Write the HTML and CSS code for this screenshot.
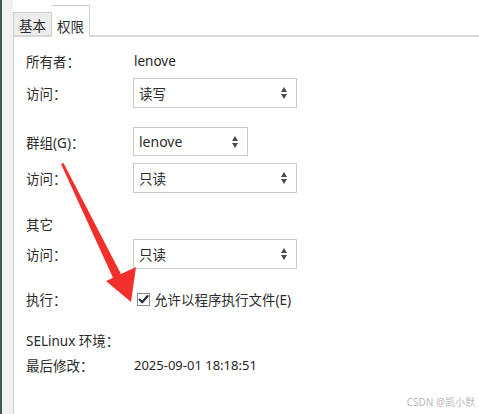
FILE: index.html
```html
<!DOCTYPE html>
<html lang="zh">
<head>
<meta charset="utf-8">
<title>权限</title>
<link rel="stylesheet" href="styles.css">
</head>
<body>
<div class="window">
  <div class="edge"></div>
  <div class="main">
    <div class="tabs">
      <div class="tab">基本</div>
      <div class="tab active">权限</div>
      <div class="tab-fill"></div>
    </div>
    <div class="panel">
      <div class="row r-owner"><span class="label">所有者：</span><span class="value">lenove</span></div>
      <div class="row r-acc1"><span class="label">访问：</span>
        <div class="combo wide"><span>读写</span><span class="spin"><i class="up"></i><i class="down"></i></span></div>
      </div>
      <div class="row r-group"><span class="label">群组(G)：</span>
        <div class="combo narrow"><span class="latin">lenove</span><span class="spin"><i class="up"></i><i class="down"></i></span></div>
      </div>
      <div class="row r-acc2"><span class="label">访问：</span>
        <div class="combo wide"><span>只读</span><span class="spin"><i class="up"></i><i class="down"></i></span></div>
      </div>
      <div class="row r-other"><span class="label">其它</span></div>
      <div class="row r-acc3"><span class="label">访问：</span>
        <div class="combo wide"><span>只读</span><span class="spin"><i class="up"></i><i class="down"></i></span></div>
      </div>
      <div class="row r-exec"><span class="label">执行：</span>
        <label class="check">
          <svg class="box" width="13" height="13" viewBox="0 0 13 13">
            <rect x="0.5" y="0.5" width="12" height="12" fill="#fff" stroke="#8a8a8a"/>
            <path d="M2.6 6.6 L5.2 9.3 L10.6 3.0" fill="none" stroke="#1f2a3a" stroke-width="2.1" stroke-linecap="round" stroke-linejoin="round"/>
          </svg>
          <span>允许以程序执行文件(E)</span>
        </label>
      </div>
      <div class="row r-selinux"><span class="label">SELinux 环境：</span></div>
      <div class="row r-mod"><span class="label">最后修改：</span><span class="value date">2025-09-01 18:18:51</span></div>
    </div>
  </div>
  <div class="watermark">CSDN @凯小默</div>
  <svg class="arrow" width="479" height="414" viewBox="0 0 479 414">
    <polygon points="61,164 63.5,163 122,276 114,280" fill="#f2302b"/>
    <polygon points="131,302 106,281 136,267" fill="#f2302b"/>
  </svg>
</div>
</body>
</html>
```
FILE: styles.css
```css
html, body {
  margin: 0;
  padding: 0;
  background: #ffffff;
}
body {
  font-family: "Noto Sans", "Noto Sans CJK SC", sans-serif;
  font-size: 13.5px;
  color: #2b2b2b;
}
.window {
  position: relative;
  width: 479px;
  height: 414px;
  display: flex;
  overflow: hidden;
}
.edge {
  width: 11px;
  flex: none;
  background: #f1f1f1;
  border-left: 2px solid #3f5a5a;
}
.main {
  flex: 1;
  display: flex;
  flex-direction: column;
}
.tabs {
  height: 36px;
  display: flex;
  align-items: flex-end;
  background: #ffffff;
}
.tab {
  box-sizing: border-box;
  height: 24px;
  width: 39px;
  background: #ececec;
  border: 1px solid #cfcfcf;
  border-bottom: 1px solid #d6d6d6;
  display: flex;
  align-items: center;
  justify-content: center;
  padding-top: 2px;
  font-family: "Noto Sans CJK SC", sans-serif;
  font-size: 13.5px;
  color: #2b2b2b;
}
.tab.active {
  height: 32px;
  width: 38px;
  margin-bottom: -1px;
  background: #ffffff;
  border-left: none;
  border-bottom: 1px solid #ffffff;
  padding-top: 9px;
  position: relative;
  z-index: 1;
}
.tab-fill {
  flex: 1;
  height: 0;
  border-bottom: 1px solid #d9d9d9;
}
.panel {
  flex: 1;
  border-left: 1px solid #cfcfcf;
  border-top: 1px solid #d9d9d9;
  padding-left: 12px;
  padding-top: 9px;
  display: flex;
  flex-direction: column;
}
.row {
  display: flex;
  align-items: center;
}
.label {
  width: 108px;
  flex: none;
}
.value {
  color: #262626;
}
.value.date { font-size: 13px; }
.r-owner { height: 30px; }
.r-acc1 { margin-top: 2px; }
.r-group { margin-top: 19px; }
.r-acc2 { margin-top: 7px; }
.r-other { margin-top: 21px; height: 20px; }
.r-acc3 { margin-top: 5px; }
.r-exec { margin-top: 16px; height: 28px; }
.r-selinux { margin-top: 17px; height: 20px; }
.r-mod { margin-top: 5px; height: 20px; }
.combo {
  box-sizing: border-box;
  height: 30px;
  border: 1px solid #c9c9c9;
  background: #ffffff;
  display: flex;
  align-items: center;
  justify-content: space-between;
  padding: 0 9px 0 5px;
  margin-left: -1px;
}
.combo.wide { width: 164px; }
.combo.narrow { width: 115px; height: 29px; }
.combo .latin { font-size: 14px; }
.spin {
  display: flex;
  flex-direction: column;
  gap: 2px;
}
.spin i {
  display: block;
  width: 0;
  height: 0;
  border-left: 3px solid transparent;
  border-right: 3px solid transparent;
}
.spin .up { border-bottom: 5px solid #4a4a4a; }
.spin .down { border-top: 5px solid #4a4a4a; }
.check {
  display: flex;
  align-items: center;
  gap: 4px;
  margin-left: 3px;
}
.box { display: block; }
.watermark {
  position: absolute;
  right: 4px;
  bottom: 5px;
  font-size: 10px;
  color: #b9b9b9;
}
.arrow {
  position: absolute;
  left: 0;
  top: 0;
  pointer-events: none;
}
```
